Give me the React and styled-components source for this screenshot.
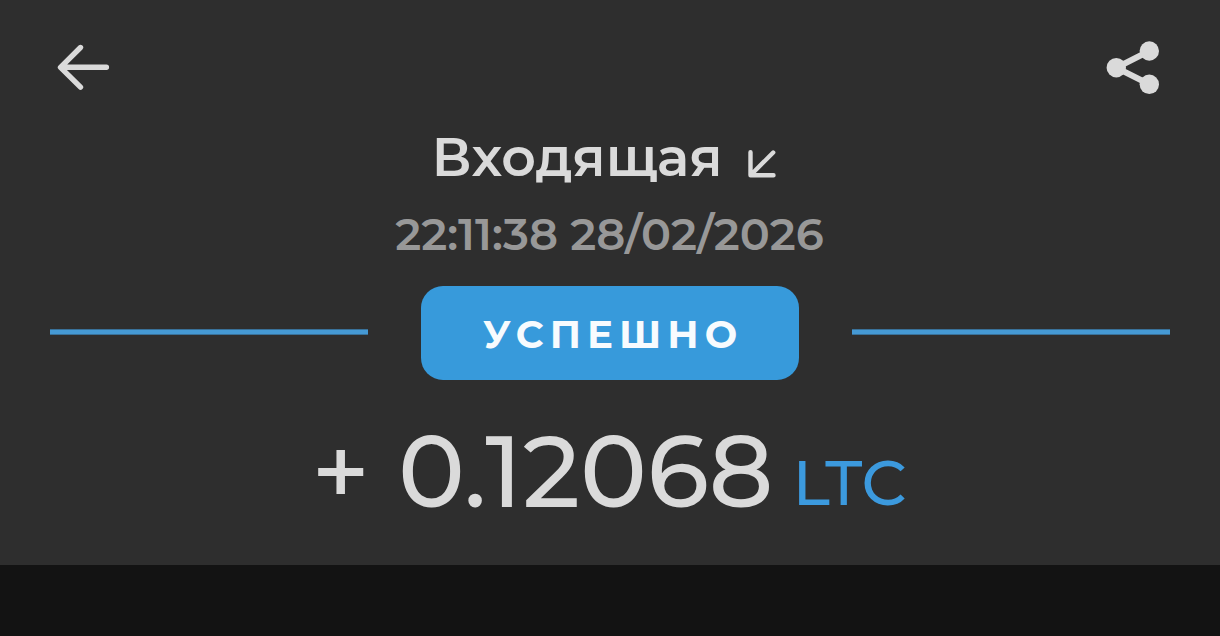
import React, { Component } from "react";
import styled, { createGlobalStyle } from "styled-components";

const GlobalStyle = createGlobalStyle`
  body {
    margin: 0;
    background: #131313;
    font-family: Montserrat, Inter, "Liberation Sans", sans-serif;
  }
`;

const Header = styled.header`
  display: flex;
  flex-direction: column;
  align-items: center;
  box-sizing: border-box;
  width: 1220px;
  height: 565px;
  padding: 0 50px;
  background: #2e2e2e;
  color: #dadada;
  white-space: nowrap;
`;

const TopBar = styled.div`
  display: flex;
  justify-content: space-between;
  align-self: stretch;
  height: 127px;
`;

const IconButton = styled.button`
  width: 70px;
  height: 70px;
  margin-top: 32px;
  padding: 0;
  border: 0;
  background: none;
  color: inherit;

  svg {
    display: block;
  }
`;

const Title = styled.h1`
  display: flex;
  align-items: center;
  gap: 26px;
  height: 60px;
  margin: 0 12px 0 0;
  font-size: 53.8px;
  font-weight: 600;
  line-height: 60px;

  svg {
    margin-top: 13px;
  }
`;

const DateText = styled.div`
  height: 50px;
  margin: 22px 1px 0 0;
  color: #989898;
  font-size: 44.6px;
  font-weight: 600;
  line-height: 50px;
`;

const StatusRow = styled.div`
  display: flex;
  align-self: stretch;
  justify-content: space-between;
  margin-top: 27px;
`;

const Line = styled.span`
  box-sizing: border-box;
  width: 318px;
  height: 6px;
  margin-top: 43px;
  border: solid #397199;
  border-width: 1px 0;
  background: #4599d4;
`;

const Badge = styled.div`
  width: 378px;
  height: 94px;
  border-radius: 22px;
  background: #379adb;
  color: #f7fbfe;
  font-size: 38.5px;
  font-weight: 700;
  line-height: 98px;
  letter-spacing: 6px;
  text-indent: 6px;
  text-align: center;
`;

const Amount = styled.div`
  display: flex;
  height: 100px;
  margin: 41px 2px 0 0;
  font-size: 100.4px;
  font-weight: 500;
  line-height: 100px;
`;

const Sign = styled.span`
  margin-right: 28px;
`;

const Currency = styled.span`
  margin-left: 19px;
  color: #3c9ade;
  font-size: 63px;
  line-height: 124px;
`;

const BackIcon = () => (
  <svg width="70" height="70" viewBox="0 0 70 70" fill="none">
    <path
      d="M30.5 15.5L10.5 35.3L30.5 55.1M11 35.3H56.4"
      stroke="currentColor"
      strokeWidth="5.4"
      strokeLinecap="round"
      strokeLinejoin="round"
    />
  </svg>
);

const ShareIcon = () => (
  <svg width="70" height="70" viewBox="0 0 70 70" fill="currentColor">
    <path
      d="M49.3 19L16.3 35.7L49.3 52.3"
      fill="none"
      stroke="currentColor"
      strokeWidth="6"
    />
    <circle cx="16.3" cy="35.7" r="9.7" />
    <circle cx="49.3" cy="19" r="9.7" />
    <circle cx="49.3" cy="52.3" r="9.7" />
  </svg>
);

const IncomingIcon = () => (
  <svg width="28" height="28" viewBox="0 0 28 28" fill="none">
    <path
      d="M2.5 2.3V25.3H25.5M25.2 2.5L2.8 25"
      stroke="currentColor"
      strokeWidth="4.4"
      strokeLinecap="round"
      strokeLinejoin="round"
    />
  </svg>
);

class Transaction extends Component {
  render() {
    const { type, date, status, amount, currency } = this.props;
    return (
      <Header>
        <TopBar>
          <IconButton>
            <BackIcon />
          </IconButton>
          <IconButton>
            <ShareIcon />
          </IconButton>
        </TopBar>
        <Title>
          <span>{type}</span>
          <IncomingIcon />
        </Title>
        <DateText>{date}</DateText>
        <StatusRow>
          <Line />
          <Badge>{status}</Badge>
          <Line />
        </StatusRow>
        <Amount>
          <Sign>+</Sign>
          <span>{amount}</span>
          <Currency>{currency}</Currency>
        </Amount>
      </Header>
    );
  }
}

const App = () => (
  <>
    <GlobalStyle />
    <Transaction
      type="Входящая"
      date="22:11:38 28/02/2026"
      status="УСПЕШНО"
      amount="0.12068"
      currency="LTC"
    />
  </>
);

export default App;
